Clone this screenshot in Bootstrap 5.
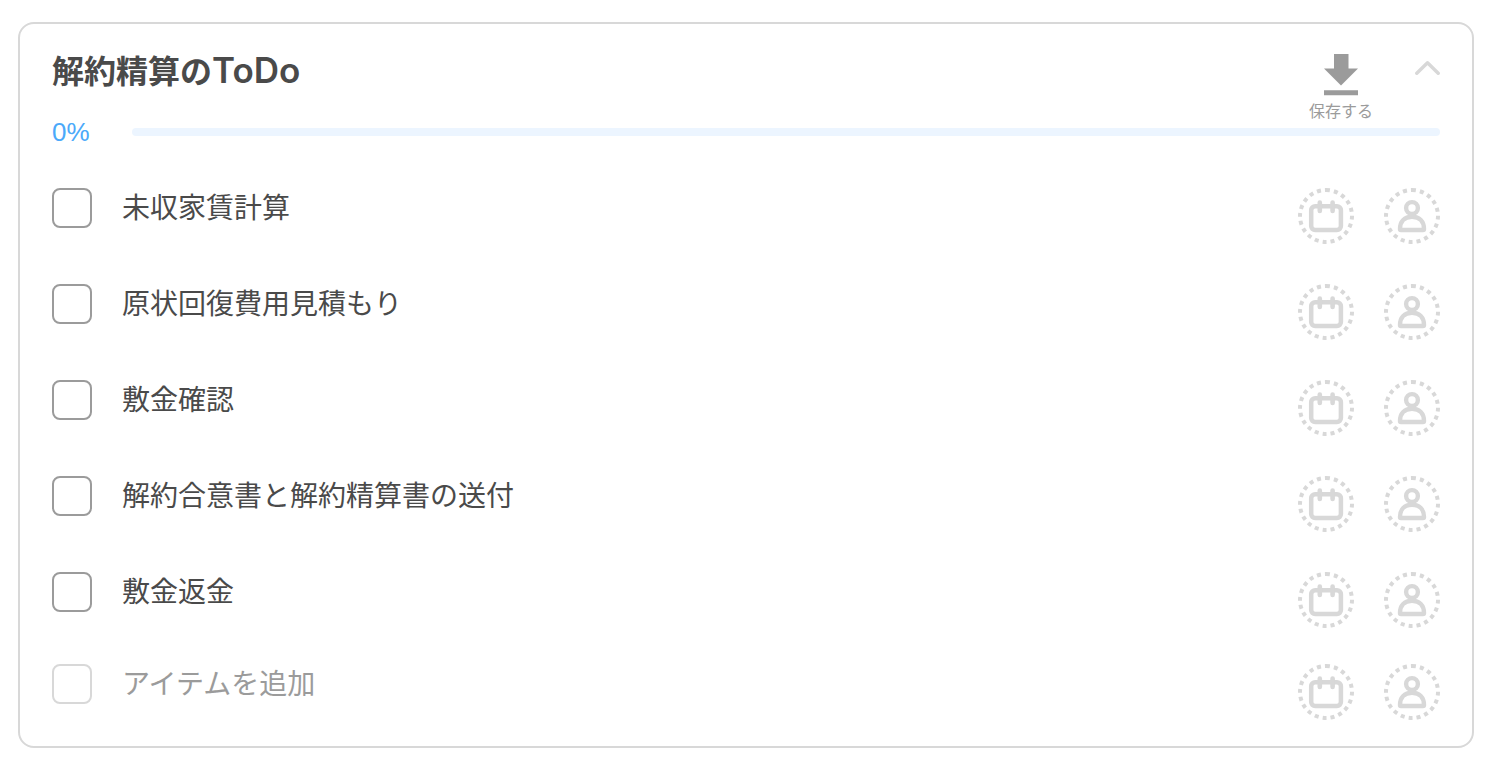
<!DOCTYPE html>
<html lang="ja">
<head>
<meta charset="utf-8">
<meta name="viewport" content="width=device-width, initial-scale=1">
<title>解約精算のToDo</title>
<link rel="stylesheet" href="https://cdn.jsdelivr.net/npm/bootstrap@5.3.0/dist/css/bootstrap.min.css">
<style>
  body { font-family: Inter, "Noto Sans CJK JP", sans-serif; color: #4a4a4a; background: #fff; padding: 22px 24px 16px 18px; }
  .todo-card { border: 2px solid #d8d8d8; border-radius: 16px; padding: 28px 32px 26px; }
  .todo-title { font-size: 32px; line-height: 40px; font-weight: 700; }
  .title-latin { font-size: 35px; line-height: 1; font-weight: 600; }
  .save-btn { color: #9b9b9b; font-size: 16px; line-height: 18px; gap: 6px; padding-top: 2px; }
  .fold-btn { color: #d8d8d8; margin-left: 42px; padding-top: 8px; }
  .percent { width: 80px; font-family: "Liberation Sans", sans-serif; font-size: 26px; line-height: 24px; color: #4ba9fa; }
  .todo-progress { height: 8px; border-radius: 4px; background: #ecf5ff; }
  .todo-list { margin-top: 44px; gap: 40px; }
  .todo-row { gap: 30px; }
  .todo-row .form-check-input { width: 40px; height: 40px; border: 2px solid #9b9b9b; border-radius: 8px; }
  .todo-text { font-size: 28px; line-height: 40px; }
  .new-row { margin-top: 36px; }
  .todo-row.new-row .form-check-input { border-color: #d8d8d8; opacity: 1; }
  .new-row .form-control { color: #4a4a4a; min-height: 0; }
  .new-row .form-control::placeholder { color: #9b9b9b; opacity: 1; }
  .round-btn { color: #d8d8d8; }
  .round-btn svg { width: 56px; height: 56px; }
  button svg { display: block; fill: none; stroke: currentColor; }
</style>
</head>
<body>
<svg class="d-none" aria-hidden="true">
  <symbol id="calendar" viewBox="0 0 56 56">
    <circle cx="28" cy="28" r="26" stroke-width="4" stroke-dasharray="4 4.06" transform="rotate(-90 28 28)"/>
    <rect x="13.200" y="18.200" width="29.700" height="23.800" rx="4" stroke-width="4.500"/>
    <path d="M21.800 14.500v8.500M34.600 14.500v8.500" stroke-width="4.600" stroke-linecap="round"/>
  </symbol>
  <symbol id="person" viewBox="0 0 56 56">
    <circle cx="28" cy="28" r="26" stroke-width="4" stroke-dasharray="4 4.060" transform="rotate(-90 28 28)"/>
    <circle cx="28" cy="20" r="5.900" stroke-width="4.400"/>
    <path d="M17 42h22a1 1 0 0 0 1-1c0-7.500-4.500-12.200-12-12.200s-12 4.700-12 12.200a1 1 0 0 0 1 1z" stroke-width="4.400"/>
  </symbol>
</svg>
<main class="todo-card">
  <header class="d-flex align-items-start">
    <h1 class="todo-title mb-0 me-auto">解約精算の<span class="title-latin">ToDo</span></h1>
    <button type="button" class="save-btn border-0 bg-transparent px-0 pb-0 d-flex flex-column align-items-center">
      <svg width="34" height="42" viewBox="0 0 34 42" aria-hidden="true"><path d="M10 0h14.500v14.500H34L17 31.500 0 14.500h10zM0 36.300h34v5H0z" fill="currentColor" stroke="none"/></svg>
      <span>保存する</span>
    </button>
    <button type="button" class="fold-btn border-0 bg-transparent px-0 pb-0" aria-label="折りたたむ">
      <svg width="25" height="16" viewBox="0 0 25 16" aria-hidden="true"><path d="M1.800 13.300L12.500 2.700l10.700 10.600" stroke-width="3.400" stroke-linecap="round" stroke-linejoin="round"/></svg>
    </button>
  </header>
  <div class="d-flex align-items-center">
    <span class="percent flex-shrink-0">0%</span>
    <div class="progress todo-progress flex-grow-1" role="progressbar" aria-label="進捗" aria-valuenow="0" aria-valuemin="0" aria-valuemax="100"><div class="progress-bar" style="width:0%"></div></div>
  </div>
  <ul class="todo-list list-unstyled d-flex flex-column mb-0">
    <li class="todo-row d-flex align-items-start">
      <input class="form-check-input m-0 flex-shrink-0" type="checkbox" id="t1">
      <label class="todo-text flex-grow-1" for="t1">未収家賃計算</label>
      <button type="button" class="round-btn border-0 bg-transparent p-0" aria-label="期日"><svg><use href="#calendar"/></svg></button>
      <button type="button" class="round-btn border-0 bg-transparent p-0" aria-label="担当者"><svg><use href="#person"/></svg></button>
    </li>
    <li class="todo-row d-flex align-items-start">
      <input class="form-check-input m-0 flex-shrink-0" type="checkbox" id="t2">
      <label class="todo-text flex-grow-1" for="t2">原状回復費用見積もり</label>
      <button type="button" class="round-btn border-0 bg-transparent p-0" aria-label="期日"><svg><use href="#calendar"/></svg></button>
      <button type="button" class="round-btn border-0 bg-transparent p-0" aria-label="担当者"><svg><use href="#person"/></svg></button>
    </li>
    <li class="todo-row d-flex align-items-start">
      <input class="form-check-input m-0 flex-shrink-0" type="checkbox" id="t3">
      <label class="todo-text flex-grow-1" for="t3">敷金確認</label>
      <button type="button" class="round-btn border-0 bg-transparent p-0" aria-label="期日"><svg><use href="#calendar"/></svg></button>
      <button type="button" class="round-btn border-0 bg-transparent p-0" aria-label="担当者"><svg><use href="#person"/></svg></button>
    </li>
    <li class="todo-row d-flex align-items-start">
      <input class="form-check-input m-0 flex-shrink-0" type="checkbox" id="t4">
      <label class="todo-text flex-grow-1" for="t4">解約合意書と解約精算書の送付</label>
      <button type="button" class="round-btn border-0 bg-transparent p-0" aria-label="期日"><svg><use href="#calendar"/></svg></button>
      <button type="button" class="round-btn border-0 bg-transparent p-0" aria-label="担当者"><svg><use href="#person"/></svg></button>
    </li>
    <li class="todo-row d-flex align-items-start">
      <input class="form-check-input m-0 flex-shrink-0" type="checkbox" id="t5">
      <label class="todo-text flex-grow-1" for="t5">敷金返金</label>
      <button type="button" class="round-btn border-0 bg-transparent p-0" aria-label="期日"><svg><use href="#calendar"/></svg></button>
      <button type="button" class="round-btn border-0 bg-transparent p-0" aria-label="担当者"><svg><use href="#person"/></svg></button>
    </li>
  </ul>
  <form class="todo-row new-row d-flex align-items-start">
    <input class="form-check-input m-0 flex-shrink-0" type="checkbox" disabled aria-label="新しいアイテム">
    <input type="text" class="todo-text form-control border-0 rounded-0 p-0 flex-grow-1" placeholder="アイテムを追加" aria-label="アイテムを追加">
    <button type="button" class="round-btn border-0 bg-transparent p-0" aria-label="期日"><svg><use href="#calendar"/></svg></button>
    <button type="button" class="round-btn border-0 bg-transparent p-0" aria-label="担当者"><svg><use href="#person"/></svg></button>
  </form>
</main>
<script src="https://cdn.jsdelivr.net/npm/bootstrap@5.3.0/dist/js/bootstrap.bundle.min.js"></script>
</body>
</html>
